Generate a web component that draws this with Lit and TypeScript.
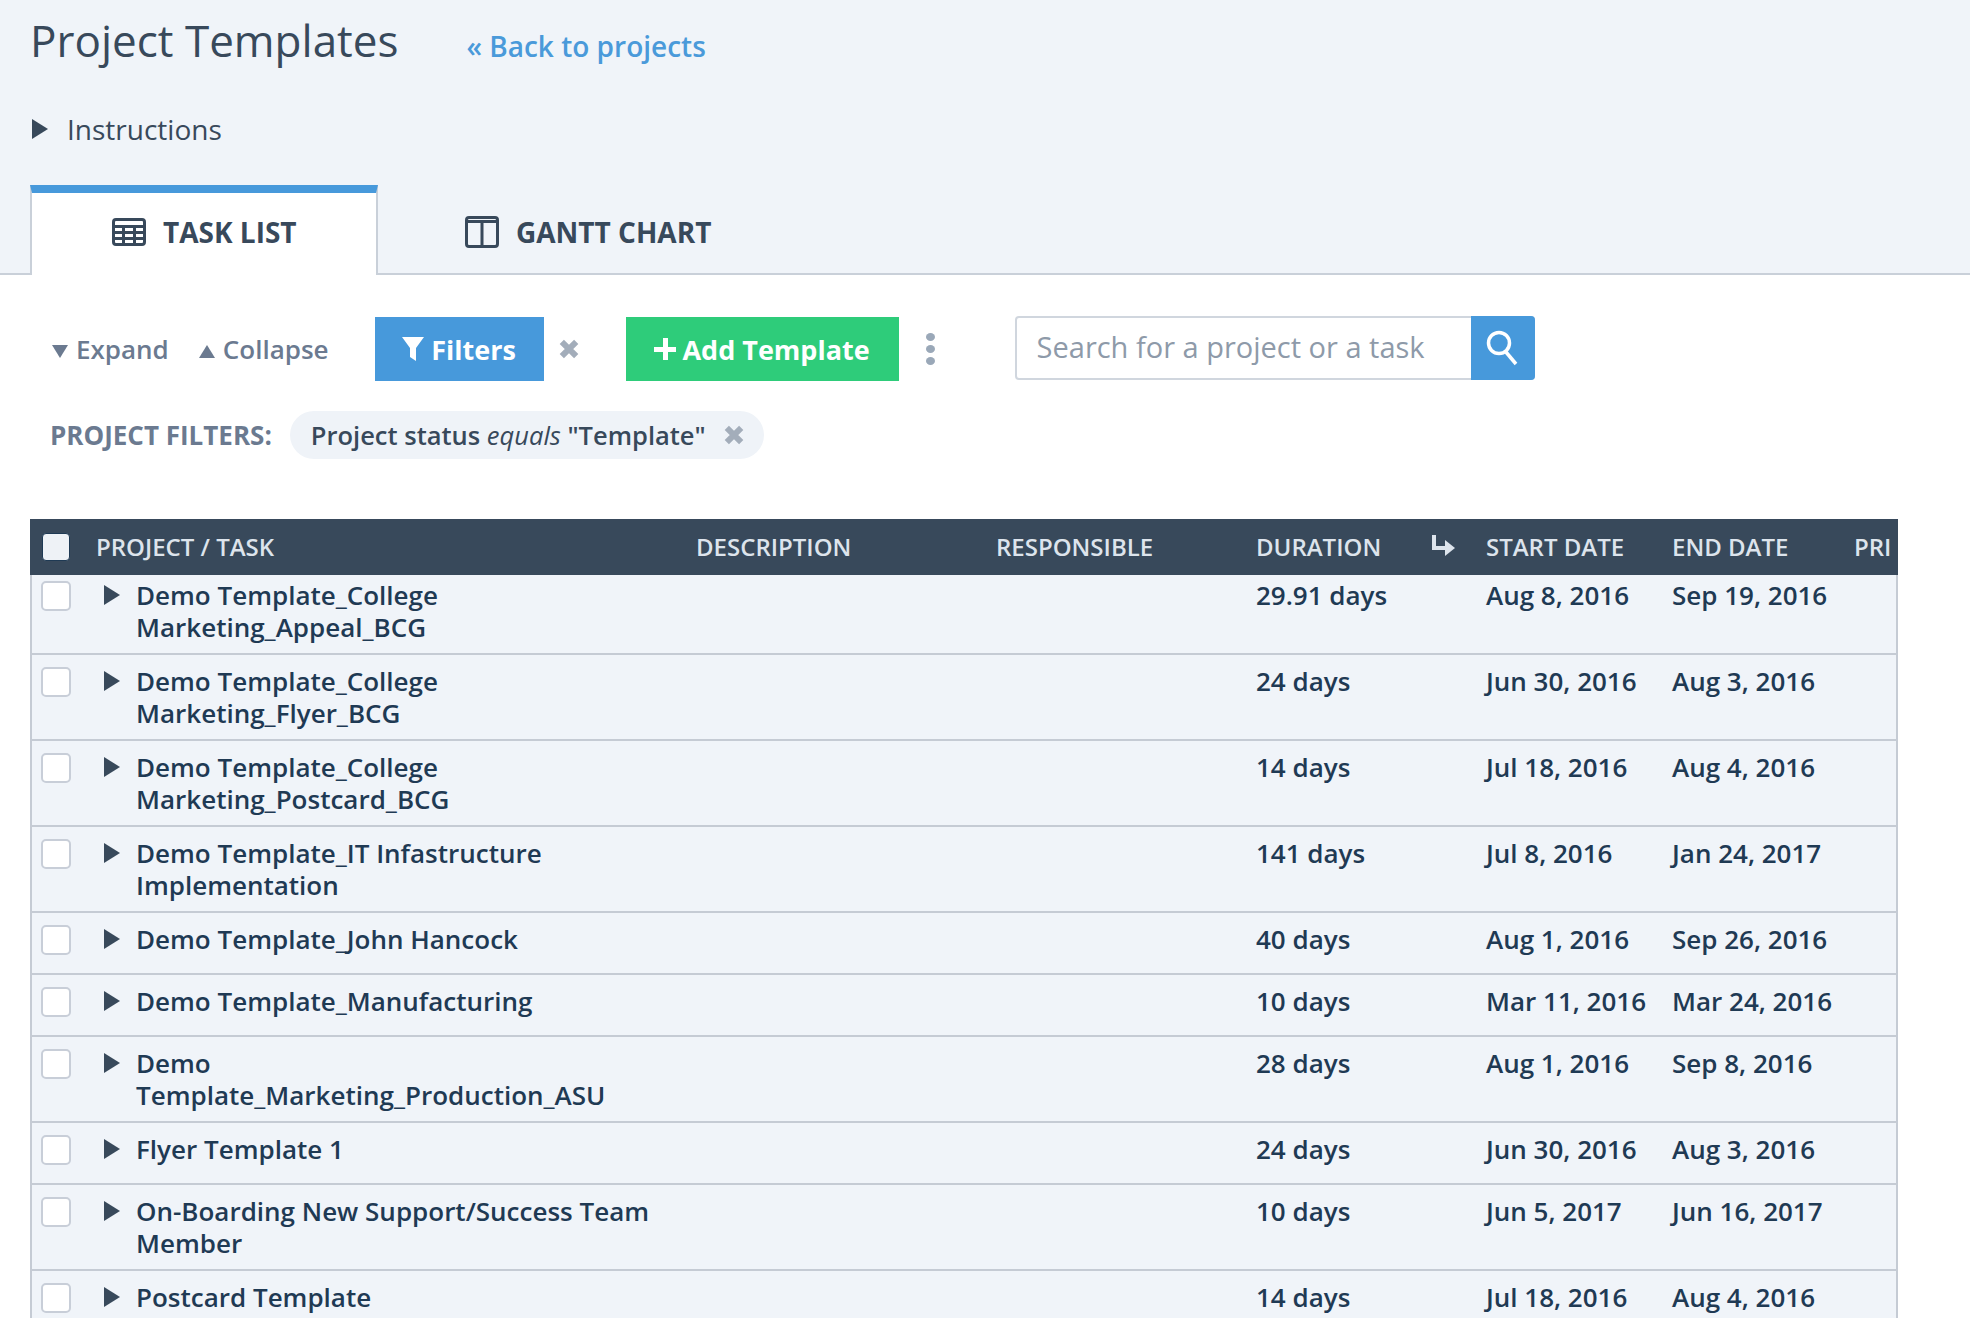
import { html, css, LitElement } from "lit";
import { customElement } from "lit/decorators.js";

const rows = [
  { name: "Demo Template_College Marketing_Appeal_BCG", duration: "29.91 days", start: "Aug 8, 2016", end: "Sep 19, 2016" },
  { name: "Demo Template_College Marketing_Flyer_BCG", duration: "24 days", start: "Jun 30, 2016", end: "Aug 3, 2016" },
  { name: "Demo Template_College Marketing_Postcard_BCG", duration: "14 days", start: "Jul 18, 2016", end: "Aug 4, 2016" },
  { name: "Demo Template_IT Infastructure Implementation", duration: "141 days", start: "Jul 8, 2016", end: "Jan 24, 2017" },
  { name: "Demo Template_John Hancock", duration: "40 days", start: "Aug 1, 2016", end: "Sep 26, 2016" },
  { name: "Demo Template_Manufacturing", duration: "10 days", start: "Mar 11, 2016", end: "Mar 24, 2016" },
  { name: "Demo Template_Marketing_Production_ASU", duration: "28 days", start: "Aug 1, 2016", end: "Sep 8, 2016" },
  { name: "Flyer Template 1", duration: "24 days", start: "Jun 30, 2016", end: "Aug 3, 2016" },
  { name: "On-Boarding New Support/Success Team Member", duration: "10 days", start: "Jun 5, 2017", end: "Jun 16, 2017" },
  { name: "Postcard Template", duration: "14 days", start: "Jul 18, 2016", end: "Aug 4, 2016" },
];

const closeIcon = html`<svg class="x" viewBox="0 0 20 20"><path d="M4 4 16 16M16 4 4 16" /></svg>`;

@customElement("app-root")
export class AppRoot extends LitElement {
  override render() {
    return html`
      <header class="top">
        <div class="title-row">
          <h1>Project Templates</h1>
          <a class="back">« Back to projects</a>
        </div>
        <div class="instructions"><span class="tri-right"></span>Instructions</div>
        <nav class="tabs">
          <div class="tab active">
            <svg class="tab-icon" viewBox="0 0 34 28">
              <rect x="1.5" y="1.5" width="31" height="25" rx="2.5" />
              <path d="M1.5 8.5H32.5M1.5 14.5H32.5M1.5 20.5H32.5M11.5 8.5V26.5M22.5 8.5V26.5" />
            </svg>
            TASK LIST
          </div>
          <div class="tab">
            <svg class="tab-icon" viewBox="0 0 34 32">
              <rect x="1.5" y="1.5" width="31" height="29" rx="2.5" />
              <path d="M1.5 5.5H32.5M17 5.5V30" />
            </svg>
            GANTT CHART
          </div>
        </nav>
      </header>

      <main class="body">
        <div class="toolbar">
          <span class="fold"><span class="tri-down"></span>Expand</span>
          <span class="fold collapse"><span class="tri-up"></span>Collapse</span>
          <button class="btn filters">
            <svg class="funnel" viewBox="0 0 22 24"><path d="M0 0H22L14 11V24L8 20V11Z" /></svg>Filters
          </button>
          <span class="filters-x">${closeIcon}</span>
          <button class="btn add"><span class="plus"></span>Add Template</button>
          <span class="kebab"><i></i><i></i><i></i></span>
          <div class="search">
            <span class="search-text">Search for a project or a task</span>
            <span class="search-btn">
              <svg viewBox="0 0 34 36"><circle cx="13" cy="13" r="10.5" /><path d="M19.5 21.5 30 34" /></svg>
            </span>
          </div>
        </div>

        <div class="filter-row">
          <span class="filter-label">PROJECT FILTERS:</span>
          <span class="pill">
            <span>Project status <em>equals</em> "Template"</span>
            ${closeIcon}
          </span>
        </div>

        <section class="table">
          <div class="grid head">
            <span class="head-check"></span>
            <span>PROJECT / TASK</span>
            <span>DESCRIPTION</span>
            <span>RESPONSIBLE</span>
            <span class="duration-head">
              DURATION
              <svg viewBox="0 0 23 22"><path class="arrow-line" d="M2 0V13H15" /><path class="arrow-head" d="M13 5 23 13 13 21Z" /></svg>
            </span>
            <span>START DATE</span>
            <span>END DATE</span>
            <span>PRI</span>
          </div>
          ${rows.map(
            (r) => html`
              <div class="grid row">
                <span class="check"></span>
                <div class="task">
                  <span class="tri-row"></span>
                  <span class="name">${r.name}</span>
                </div>
                <span></span>
                <span></span>
                <span>${r.duration}</span>
                <span>${r.start}</span>
                <span>${r.end}</span>
                <span></span>
              </div>
            `
          )}
        </section>
      </main>
    `;
  }

  static styles = css`
    :host {
      display: block;
      height: 1318px;
      overflow: hidden;
      background: #fff;
      font-family: "Open Sans", sans-serif;
      color: #1f3a54;
    }

    .top {
      background: #f0f4f9;
      height: 275px;
      box-sizing: border-box;
      padding: 0 0 0 30px;
      border-bottom: 2px solid #c9d0d9;
    }

    .title-row {
      display: flex;
      align-items: baseline;
      gap: 68px;
      height: 80px;
      padding-top: 10px;
      box-sizing: border-box;
    }

    h1 {
      margin: 0;
      font-size: 44px;
      font-weight: 400;
      color: #38495b;
      line-height: 60px;
    }

    .back {
      font-size: 28px;
      font-weight: 600;
      color: #4a9ada;
    }

    .instructions {
      display: flex;
      align-items: center;
      margin-top: 30px;
      height: 38px;
      font-size: 28px;
      color: #38495b;
    }

    .tri-right {
      width: 0;
      height: 0;
      border-left: 16px solid #38495b;
      border-top: 10px solid transparent;
      border-bottom: 10px solid transparent;
      margin: 0 19px 0 2px;
    }

    .tabs {
      display: flex;
      margin-top: 37px;
    }

    .tab {
      display: flex;
      align-items: center;
      gap: 17px;
      box-sizing: border-box;
      height: 90px;
      width: 348px;
      padding: 8px 0 4px 87px;
      font-size: 28px;
      font-weight: 700;
      color: #38495b;
    }

    .tab.active {
      background: #fff;
      border-top: 8px solid #4799db;
      border-left: 2px solid #c9d0d9;
      border-right: 2px solid #c9d0d9;
      padding: 0 0 4px 80px;
    }

    .tab-icon {
      width: 34px;
      fill: none;
      stroke: #38495b;
      stroke-width: 3;
    }

    .body {
      padding: 0 72px 0 30px;
    }

    .toolbar {
      display: flex;
      align-items: center;
      height: 64px;
      margin-top: 42px;
      color: #6b7a90;
      font-size: 26px;
      font-weight: 600;
    }

    .fold {
      display: flex;
      align-items: center;
      margin-left: 22px;
      gap: 8px;
    }

    .fold.collapse {
      margin-left: 30px;
      gap: 8px;
    }

    .tri-down,
    .tri-up {
      width: 0;
      height: 0;
      margin-top: 4px;
      border-left: 8px solid transparent;
      border-right: 8px solid transparent;
    }

    .tri-down {
      border-top: 13px solid #6b7a90;
    }

    .tri-up {
      border-bottom: 13px solid #6b7a90;
    }

    .btn {
      display: flex;
      align-items: center;
      justify-content: center;
      height: 64px;
      border: 0;
      padding: 0;
      color: #fff;
      font: 700 27px "Open Sans", sans-serif;
    }

    .filters {
      width: 169px;
      background: #4799db;
      margin-left: 46px;
      gap: 7px;
    }

    .funnel {
      width: 22px;
      height: 24px;
      fill: #fff;
    }

    .filters-x {
      display: flex;
      margin: 0 45px 0 13px;
    }

    .x {
      width: 24px;
      height: 24px;
      fill: none;
      stroke: #a3adba;
      stroke-width: 5;
      flex: none;
    }

    .add {
      width: 273px;
      background: #2ecc7a;
      gap: 6px;
    }

    .plus {
      position: relative;
      width: 22px;
      height: 22px;
      background:
        linear-gradient(#fff, #fff) center / 100% 5px no-repeat,
        linear-gradient(#fff, #fff) center / 5px 100% no-repeat;
    }

    .kebab {
      display: flex;
      flex-direction: column;
      gap: 4px;
      margin: 0 80px 0 27px;
    }

    .kebab i {
      display: block;
      width: 9px;
      height: 8px;
      border-radius: 50%;
      background: #9aa8b8;
    }

    .search {
      display: flex;
      width: 520px;
      height: 64px;
      box-sizing: border-box;
      border-radius: 4px;
      border: 2px solid #d0d6de;
      position: relative;
      top: -1px;
    }

    .search-text {
      flex: 1;
      line-height: 58px;
      padding-left: 20px;
      font-size: 29px;
      font-weight: 500;
      white-space: nowrap;
      color: #8e9aa9;
    }

    .search-btn {
      width: 64px;
      margin: -2px;
      background: #4799db;
      border-radius: 0 4px 4px 0;
      display: flex;
      align-items: center;
      justify-content: center;
    }

    .search-btn svg {
      width: 34px;
      height: 36px;
      fill: none;
      stroke: #fff;
      stroke-width: 3.5;
    }

    .filter-row {
      display: flex;
      align-items: center;
      height: 48px;
      margin-top: 30px;
      padding-left: 20px;
      gap: 18px;
    }

    .filter-label {
      font-size: 26px;
      font-weight: 700;
      color: #6b7a90;
    }

    .pill {
      display: flex;
      align-items: center;
      height: 48px;
      border-radius: 24px;
      background: #eff3f8;
      padding: 0 18px 0 21px;
      gap: 16px;
      font-size: 25.5px;
      font-weight: 600;
      color: #38495b;
    }

    .pill em {
      font-weight: 500;
    }

    .table {
      margin-top: 60px;
      width: 1868px;
    }

    .grid {
      display: grid;
      grid-template-columns: 66px 600px 300px 260px 230px 186px 182px 44px;
    }

    .head {
      height: 56px;
      padding-bottom: 2px;
      box-sizing: border-box;
      align-items: center;
      background: #38495b;
      color: #dde4ec;
      font-size: 24px;
      font-weight: 600;
      overflow: hidden;
      white-space: nowrap;
    }

    .head-check {
      width: 28px;
      height: 28px;
      margin: 2px 0 0 12px;
      box-sizing: border-box;
      background: #eef2f6;
      border: 1px solid #1f3a54;
      border-radius: 4px;
    }

    .duration-head {
      position: relative;
    }

    .duration-head svg {
      position: absolute;
      left: 176px;
      top: 5px;
      width: 23px;
      height: 22px;
    }

    .arrow-line {
      fill: none;
      stroke: #dde4ec;
      stroke-width: 4;
    }

    .arrow-head {
      fill: #dde4ec;
    }

    .row {
      box-sizing: border-box;
      min-height: 62px;
      padding: 10px 0;
      background: #f0f4f9;
      border-bottom: 2px solid #c5cbd4;
      box-shadow: inset 2px 0 0 #c5cbd4, inset -2px 0 0 #c5cbd4;
      font-size: 26px;
      font-weight: 600;
      line-height: 32px;
      white-space: nowrap;
    }

    .head + .row {
      padding-top: 4px;
    }

    .check {
      width: 30px;
      height: 30px;
      box-sizing: border-box;
      margin: 2px 0 0 11px;
      background: #fff;
      border: 2px solid #c8ced8;
      border-radius: 5px;
    }

    .task {
      display: flex;
      align-items: flex-start;
    }

    .tri-row {
      width: 0;
      height: 0;
      margin: 6px 16px 0 8px;
      border-left: 16px solid #38495b;
      border-top: 10px solid transparent;
      border-bottom: 10px solid transparent;
    }

    .name {
      width: 528px;
      white-space: normal;
    }
  `;
}
